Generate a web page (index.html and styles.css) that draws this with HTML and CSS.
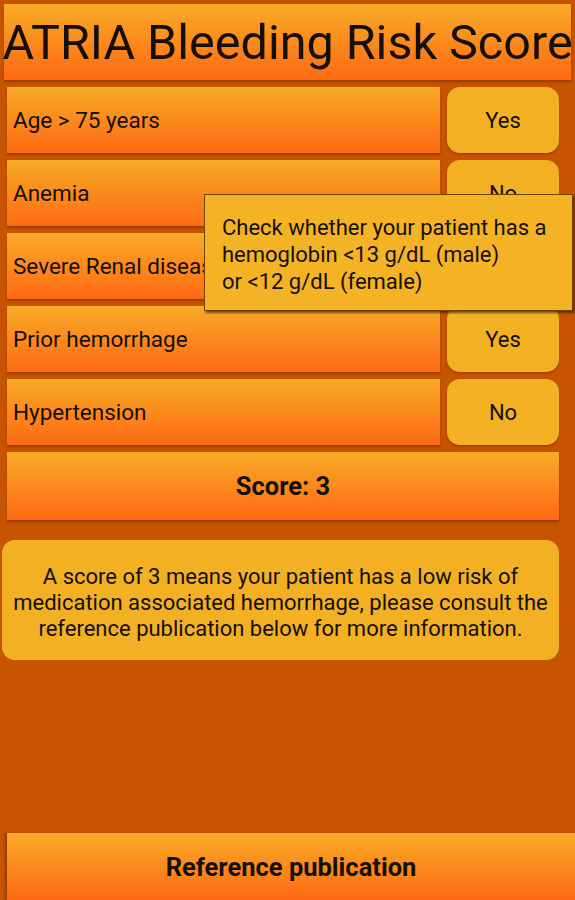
FILE: index.html
```html
<!DOCTYPE html>
<html lang="en">
<head>
  <meta charset="UTF-8" />
  <meta name="viewport" content="width=device-width, initial-scale=1.0" />
  <title>ATRIA Bleeding Risk Score</title>
  <link rel="stylesheet" href="styles.css">
</head>
<body>
  <main class="screen">
    <!-- Title bar -->
    <h1 class="title">ATRIA Bleeding Risk Score</h1>

    <!-- Risk factor rows -->
    <section class="factors">
      <div class="factor">
        <div class="factor-label">Age &gt; 75 years</div>
        <button class="toggle">Yes</button>
      </div>
      <div class="factor">
        <div class="factor-label">Anemia</div>
        <button class="toggle">No</button>
      </div>
      <div class="factor">
        <div class="factor-label">Severe Renal disease</div>
        <button class="toggle">No</button>
      </div>
      <div class="factor">
        <div class="factor-label">Prior hemorrhage</div>
        <button class="toggle">Yes</button>
      </div>
      <div class="factor">
        <div class="factor-label">Hypertension</div>
        <button class="toggle">No</button>
      </div>
      <div class="score">Score: 3</div>

      <!-- Tooltip for the anemia row -->
      <div class="tooltip">
        Check whether your patient has a<br>
        hemoglobin &lt;13 g/dL (male)<br>
        or &lt;12 g/dL (female)
      </div>
    </section>

    <!-- Interpretation -->
    <p class="result">A score of 3 means your patient has a low risk of medication associated hemorrhage, please consult the reference publication below for more information.</p>

    <a class="reference" href="#">Reference publication</a>
  </main>
</body>
</html>
```

FILE: styles.css
```css
/* Global reset and font settings */
* { box-sizing: border-box; }
body, html {
  margin: 0;
  padding: 0;
  font-family: Roboto, 'Liberation Sans', sans-serif;
  background-color: #c65400;
  color: #141008;
}

/* Page layout */
.screen {
  height: 900px;
  overflow: hidden;
  display: flex;
  flex-direction: column;
}

/* Shared orange gradient */
.title, .factor-label, .score, .reference {
  background: linear-gradient(to bottom, #f8ab27 0%, #fb8a1c 50%, #ff6914 100%);
  box-shadow: 0 2px 2px rgba(120, 40, 0, 0.55);
}

/* Title bar */
.title {
  margin: 4px 4px 0 4px;
  height: 76px;
  display: flex;
  align-items: center;
  justify-content: center;
  font-size: 48.5px;
  font-weight: 400;
  white-space: nowrap;
}

/* Factor rows */
.factors {
  position: relative;
  display: flex;
  flex-direction: column;
  gap: 7px;
  padding: 7px 16px 0 7px;
}
.factor {
  display: flex;
  gap: 7px;
  height: 66px;
}
.factor-label {
  flex: 1;
  display: flex;
  align-items: center;
  padding-left: 6px;
  font-size: 22.5px;
  white-space: nowrap;
  overflow: hidden;
}
.toggle {
  width: 112px;
  border: none;
  border-radius: 13px;
  background-color: #f3b023;
  font-family: inherit;
  font-size: 22px;
  color: inherit;
  box-shadow: 0 2px 2px rgba(120, 40, 0, 0.4);
  cursor: pointer;
}

/* Score bar */
.score {
  height: 68px;
  display: flex;
  align-items: center;
  justify-content: center;
  font-size: 25.5px;
  font-weight: 700;
}

/* Tooltip over the rows */
.tooltip {
  position: absolute;
  left: 204px;
  top: 114px;
  width: 369px;
  height: 117px;
  padding: 19px 0 0 17px;
  background-color: #f4b324;
  border: 1px solid #6a4300;
  box-shadow: 2px 2px 2px rgba(60, 30, 0, 0.7);
  font-size: 22px;
  line-height: 27px;
}

/* Result explanation */
.result {
  margin: 20px 16px 0 2px;
  height: 120px;
  display: flex;
  align-items: center;
  justify-content: center;
  padding: 6px 4px 0 4px;
  text-align: center;
  background-color: #f3b023;
  border-radius: 13px;
  font-size: 22px;
  line-height: 26px;
}

/* Bottom link */
.reference {
  margin: auto 0 0 7px;
  height: 67px;
  display: flex;
  align-items: center;
  justify-content: center;
  font-size: 25.5px;
  font-weight: 700;
  color: inherit;
  text-decoration: none;
  box-shadow: -2px 0 2px rgba(120, 40, 0, 0.55);
}
```
